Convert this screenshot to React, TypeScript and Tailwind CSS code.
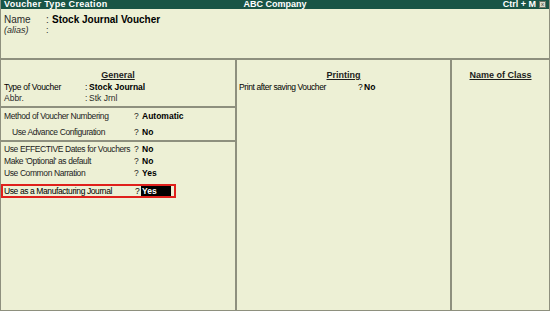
import React from 'react';

const font = { fontFamily: '"Liberation Sans", Arial, sans-serif' };

type Row = { label: string; mark: string; value: string; bold?: boolean; indent?: boolean };

const Field: React.FC<Row> = ({ label, mark, value, bold = true, indent }) => (
    <div className="flex h-[12px] items-center text-[8.5px] leading-[12px] text-[#1c1c1c] whitespace-nowrap">
        <span className={`${indent ? 'pl-[11px]' : 'pl-[3px]'} w-[133px] shrink-0 tracking-[-0.4px]`}>{label}</span>
        <span className="w-[8px] shrink-0">{mark}</span>
        <span className={bold ? 'font-bold text-black' : ''}>{value}</span>
    </div>
);

const ColHeader: React.FC<{ title: string }> = ({ title }) => (
    <div className="flex h-[16px] items-end justify-center pb-[1px]">
        <span className="text-[9px] leading-[10px] font-bold underline underline-offset-1 text-[#1c1c1c]">{title}</span>
    </div>
);

const App: React.FC = () => {
    return (
        <div style={font} className="w-[550px] h-[311px] overflow-hidden bg-[#edf0d5] flex flex-col border-x border-b border-[#8e907e]">
            {/* title bar */}
            <div className="h-[9px] bg-[#195546] flex items-center text-white text-[9px] leading-[9px] font-bold px-[3px] whitespace-nowrap">
                <span className="flex-1 tracking-[0.3px]">Voucher Type Creation</span>
                <span className="flex-1 text-center">ABC Company</span>
                <span className="flex-1 flex justify-end items-center gap-[3px]">
                    <span>Ctrl + M</span>
                    <span className="w-[7px] h-[7px] bg-[#d8dccb] border border-[#6d7163] text-[6px] leading-[5px] text-[#333] text-center font-normal">x</span>
                </span>
            </div>

            {/* name area */}
            <div className="h-[49px] pt-[3px] text-[#2a2a2a] whitespace-nowrap">
                <div className="flex items-center h-[14px]">
                    <span className="pl-[3px] w-[45px] text-[10px]">Name</span>
                    <span className="w-[6px] text-[10px]">:</span>
                    <span className="text-[10px] font-bold text-black">Stock Journal Voucher</span>
                </div>
                <div className="flex items-center h-[10px]">
                    <span className="pl-[3px] w-[45px] text-[9px] italic">(alias)</span>
                    <span className="text-[9px]">:</span>
                </div>
            </div>

            {/* columns */}
            <div className="flex-1 grid grid-cols-[236px_215px_1fr] border-t-2 border-[#8e907e] whitespace-nowrap">
                <div className="border-r-2 border-[#8e907e] flex flex-col">
                    <div className="pt-[5px]">
                        <ColHeader title="General" />
                    </div>
                    <div className="flex h-[11px] items-center text-[8.5px] mt-[1px]">
                        <span className="pl-[3px] w-[84px] tracking-[-0.3px]">Type of Voucher</span>
                        <span className="w-[4px]">:</span>
                        <span className="font-bold">Stock Journal</span>
                    </div>
                    <div className="flex h-[11px] items-center text-[8.5px] text-[#2a2a2a]">
                        <span className="pl-[3px] w-[84px]">Abbr.</span>
                        <span className="w-[4px]">:</span>
                        <span>Stk Jrnl</span>
                    </div>
                    <div className="mt-[2px] border-t-2 border-[#8e907e] pt-[2px] pb-[2px]">
                        <Field label="Method of Voucher Numbering" mark="?" value="Automatic" />
                        <div className="h-[4px]" />
                        <Field label="Use Advance Configuration" mark="?" value="No" indent />
                    </div>
                    <div className="border-t-2 border-[#8e907e] pt-[1px]">
                        <Field label="Use EFFECTIVE Dates for Vouchers" mark="?" value="No" />
                        <Field label="Make 'Optional' as default" mark="?" value="No" />
                        <Field label="Use Common Narration" mark="?" value="Yes" />
                        <div className="mt-[5px] w-[175px] h-[14px] border-2 border-[#e0201c] flex items-center text-[8.5px]">
                            <span className="pl-[1px] w-[132px] shrink-0 tracking-[-0.4px]">Use as a Manufacturing Journal</span>
                            <span className="w-[6px] shrink-0">?</span>
                            <span className="bg-black text-white font-bold w-[30px] h-[10px] leading-[10px] pl-[1px]">Yes</span>
                        </div>
                    </div>
                </div>

                <div className="border-r-2 border-[#8e907e] flex flex-col">
                    <div className="pt-[5px]">
                        <ColHeader title="Printing" />
                    </div>
                    <div className="flex h-[11px] items-center text-[8.5px] mt-[1px]">
                        <span className="pl-[2px] w-[121px] tracking-[-0.4px]">Print after saving Voucher</span>
                        <span className="w-[6px]">?</span>
                        <span className="font-bold">No</span>
                    </div>
                </div>

                <div className="flex flex-col">
                    <div className="pt-[5px]">
                        <ColHeader title="Name of Class" />
                    </div>
                </div>
            </div>
        </div>
    );
};

export default App;
